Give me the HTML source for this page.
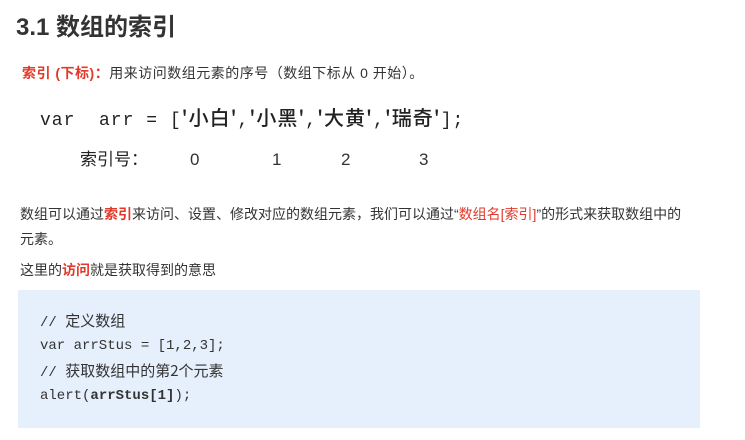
<!DOCTYPE html><html><head><meta charset="utf-8"><style>
body{margin:0;width:745px;height:440px;background:#fff;font-family:"Liberation Sans","Noto Sans CJK SC",sans-serif;color:#333;position:relative;overflow:hidden}
.a{position:absolute;white-space:nowrap;line-height:1.2}
.r{color:#e23a2a}
.m{font-family:"Liberation Mono","Noto Sans CJK SC",monospace}
.c{font-family:"Noto Sans CJK SC",sans-serif;font-weight:500;font-size:20px}
</style></head><body>
<div class="a" style="left:16px;top:14px;font-size:24px;font-weight:bold;color:#333">3.1 数组的索引</div>
<div class="a" style="left:22px;top:65px;font-size:14px;letter-spacing:0.5px"><b class="r">索引 (下标)：</b>用来访问数组元素的序号（数组下标从 0 开始）。</div>
<div class="a m" style="left:40px;top:105px;font-size:18px;color:#222;letter-spacing:1px">var&nbsp; arr = [<span class="c">'小白'</span>,<span class="c">'小黑'</span>,<span class="c">'大黄'</span>,<span class="c">'瑞奇'</span>];</div>
<div class="a" style="left:80px;top:150px;font-size:17px;color:#222">索引号：</div>
<div class="a" style="left:190px;top:150px;font-size:17px">0</div>
<div class="a" style="left:272px;top:150px;font-size:17px">1</div>
<div class="a" style="left:341px;top:150px;font-size:17px">2</div>
<div class="a" style="left:419px;top:150px;font-size:17px">3</div>
<div class="a" style="left:20px;top:206px;font-size:14px">数组可以通过<b class="r">索引</b>来访问、设置、修改对应的数组元素，我们可以通过“<span class="r">数组名[索引]</span>”的形式来获取数组中的</div>
<div class="a" style="left:20px;top:231px;font-size:14px">元素。</div>
<div class="a" style="left:20px;top:262px;font-size:14px">这里的<b class="r">访问</b>就是获取得到的意思</div>
<div class="a" style="left:18px;top:290px;width:682px;height:138px;background:#e6effc"></div>
<div class="a m" style="left:40px;top:312px;font-size:14px;color:#333">// <span style="font-family:'Noto Sans CJK SC';font-size:15px">定义数组</span></div>
<div class="a m" style="left:40px;top:338px;font-size:14px;color:#333">var arrStus = [1,2,3];</div>
<div class="a m" style="left:40px;top:362px;font-size:14px;color:#333">// <span style="font-family:'Noto Sans CJK SC';font-size:15px">获取数组中的第2个元素</span></div>
<div class="a m" style="left:40px;top:388px;font-size:14px;color:#333">alert(<b>arrStus[1]</b>);</div>
</body></html>
